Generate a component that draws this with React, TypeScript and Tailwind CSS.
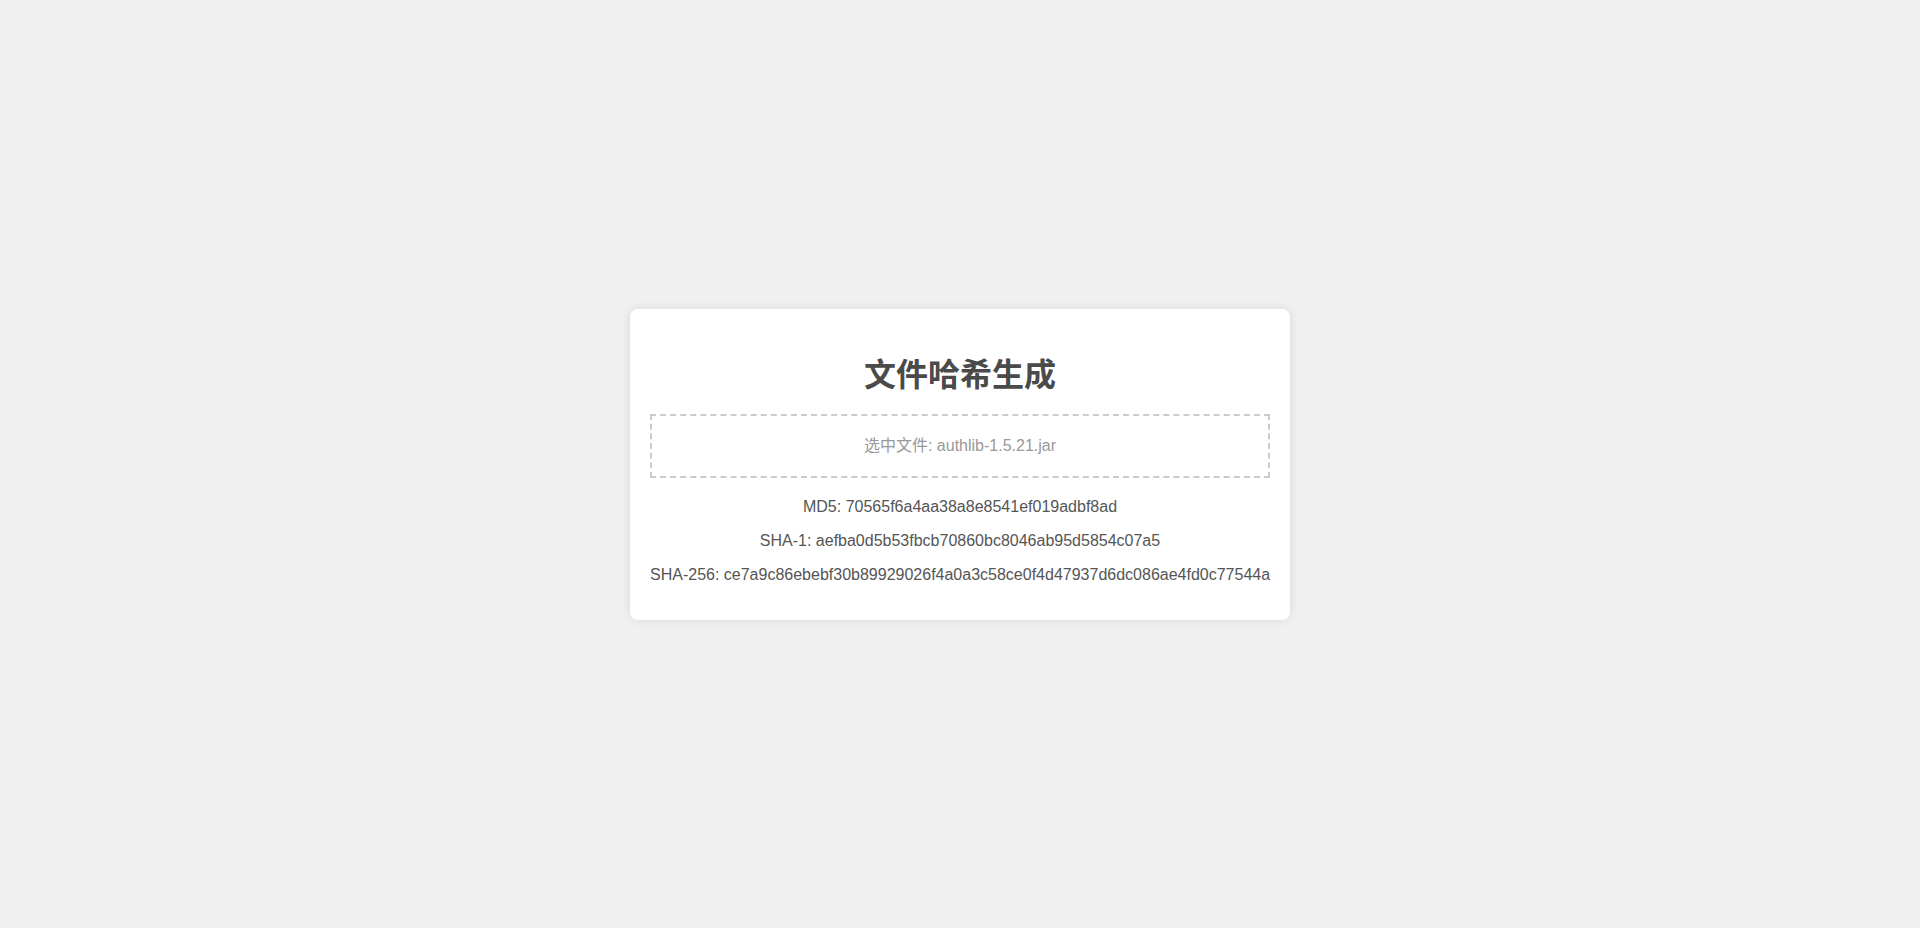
import React from "react";

export default function App() {
  const font = { fontFamily: '"Liberation Sans", Arial, "Noto Sans CJK SC", sans-serif' };
  return (
    <div className="min-h-[928px] w-full bg-[#f0f0f0] flex items-center justify-center" style={font}>
      <div className="w-[660px] bg-white rounded-[8px] shadow-[0_0_10px_rgba(0,0,0,0.1)] px-[20px] pt-[20px] pb-[20px] text-center">
        <h1 className="mt-[23px] mb-[16px] text-[32px] leading-[46px] font-bold text-[#4a4a4a]">文件哈希生成</h1>
        <div className="h-[64px] border-2 border-dashed border-[#ccc] flex items-center justify-center text-[16px] text-[#999] mb-[20px]">
          选中文件: authlib-1.5.21.jar
        </div>
        <div className="text-[16px] text-[#555] leading-[18px]">
          <p className="mb-[16px]">MD5: 70565f6a4aa38a8e8541ef019adbf8ad</p>
          <p className="mb-[16px]">SHA-1: aefba0d5b53fbcb70860bc8046ab95d5854c07a5</p>
          <p className="mb-[16px] whitespace-nowrap">SHA-256: ce7a9c86ebebf30b89929026f4a0a3c58ce0f4d47937d6dc086ae4fd0c77544a</p>
        </div>
      </div>
    </div>
  );
}
